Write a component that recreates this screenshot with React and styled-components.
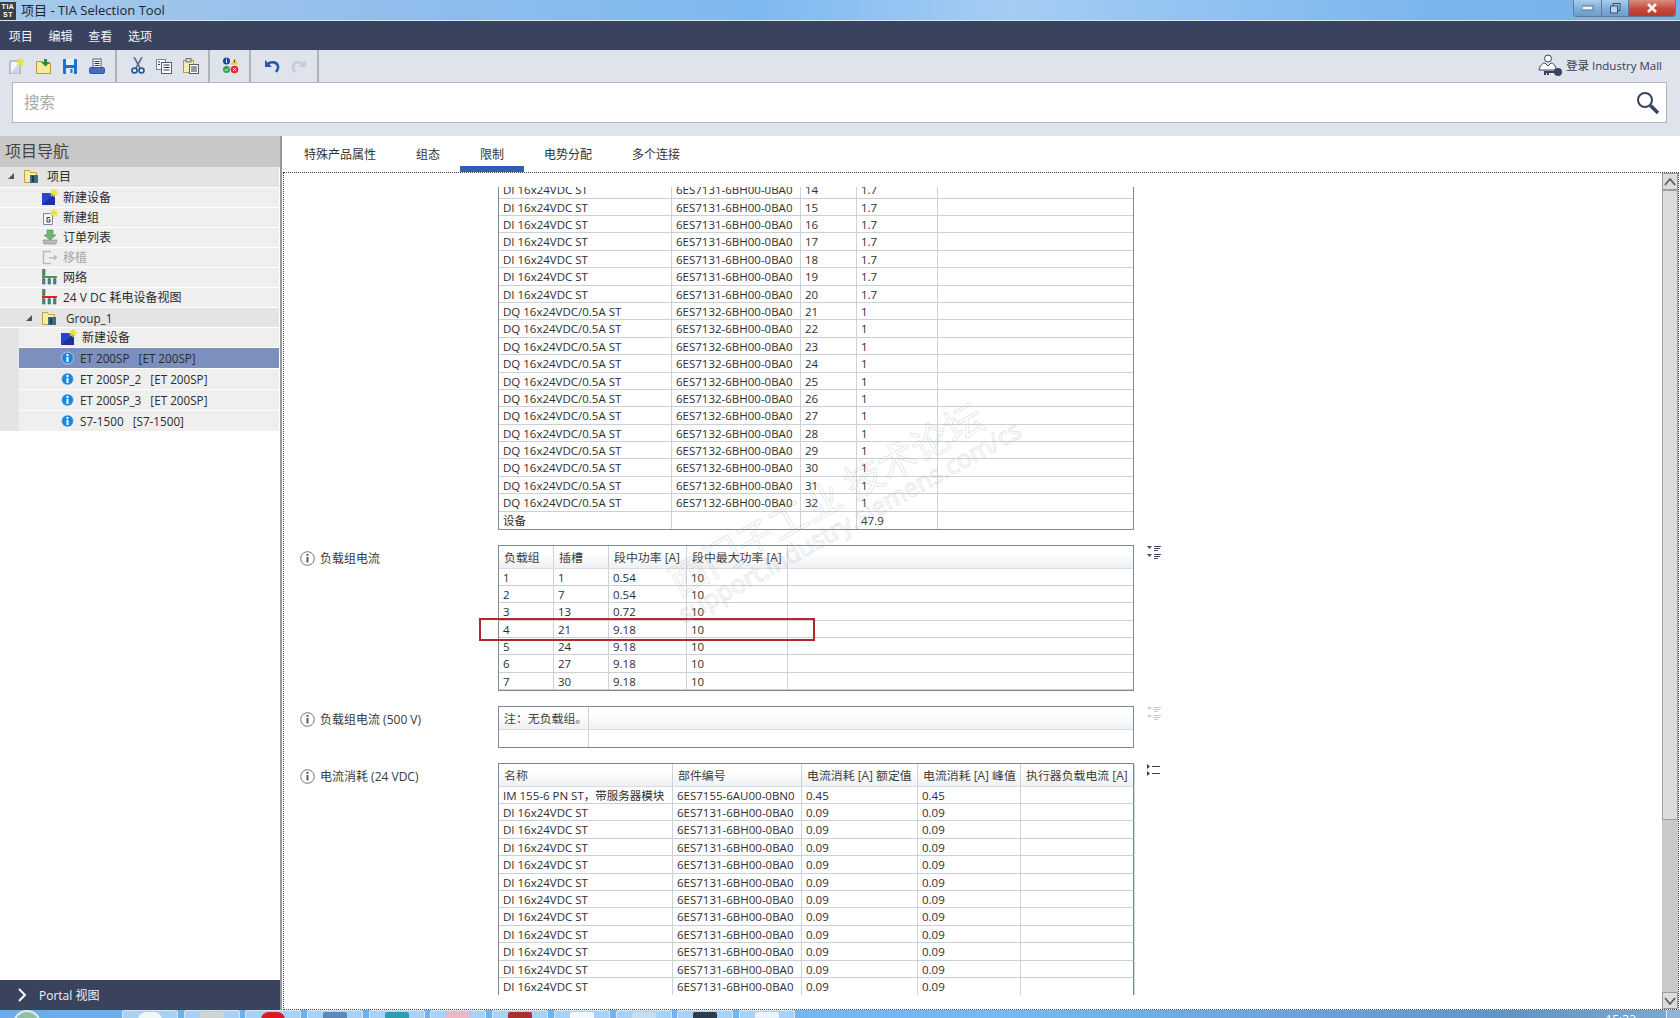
import React from "react";
import styled, { createGlobalStyle } from "styled-components";

const Global = createGlobalStyle`
  html, body { margin: 0; padding: 0; background: #fff; }
  * { box-sizing: border-box; }
  body { font-family: "Open Sans", "Noto Sans CJK SC", "Noto Sans", sans-serif; font-size: 12px; color: #2b2b2b; }
`;

const Page = styled.div`
  width: 1680px; height: 1018px; display: flex; flex-direction: column; overflow: hidden; position: relative;
`;

/* ---------- title bar ---------- */
const TitleBar = styled.div`
  height: 21px; flex: none; display: flex; align-items: flex-start; justify-content: space-between;
  background: linear-gradient(90deg, #a6c9ea 0%, #8fbdec 25%, #7fb8f0 45%, #a4cdf3 60%, #7cb5ee 85%, #79b2e8 100%);
  border-bottom: 1px solid #d8e6f4;
`;
const TitleLeft = styled.div`display: flex; align-items: center; height: 20px;`;
const AppLogo = styled.div`
  width: 16px; height: 18px; background: #3c3f45; color: #fff; font: 700 7px/8px "Liberation Sans", sans-serif;
  text-align: center; margin-top: 2px; padding-top: 1px; letter-spacing: .5px;
`;
const TitleText = styled.span`margin-left: 5px; font-size: 13px; color: #1d2530; line-height: 22px;`;
const WinControls = styled.div`
  display: flex; height: 17px; margin-right: 4px; border: 1px solid #5c7a99; border-top: none; border-radius: 0 0 4px 4px; overflow: hidden;
`;
const WinBtn = styled.div`
  width: ${p => p.$w}px; display: flex; align-items: center; justify-content: center;
  background: ${p => p.$close ? "linear-gradient(#d98d80, #c5493a 55%, #b83a2c)" : "linear-gradient(#a9cdec, #82b0dc 50%, #6c9ccc)"};
  border-right: ${p => p.$close ? "none" : "1px solid #5c7a99"};
`;

/* ---------- menu ---------- */
const MenuBar = styled.div`
  height: 29px; flex: none; background: #3a435e; display: flex; align-items: center; padding-left: 1px;
`;
const MenuItem = styled.div`width: 39.7px; text-align: center; color: #f2f4f8; font-size: 12px;`;

/* ---------- toolbar + search ---------- */
const TopArea = styled.div`height: 86px; flex: none; background: #dfe3ec; display: flex; flex-direction: column;`;
const ToolRow = styled.div`height: 32px; flex: none; display: flex; justify-content: space-between; align-items: stretch;`;
const ToolGroups = styled.div`display: flex;`;
const ToolGroup = styled.div`
  display: flex; align-items: center; gap: ${p => p.$gap ?? 11}px; padding: 0 ${p => p.$pr ?? 10}px 1px ${p => p.$pl}px; border-right: 2px solid #aeb2bb; height: 32px;
`;
const Login = styled.div`display: flex; align-items: center; gap: 3px; padding-right: 18px; padding-bottom: 2px; color: #333c50; font-size: 11.5px;`;
const SearchBox = styled.div`
  height: 41px; margin: 0 13px 0 12px; background: #fff; border: 1px solid #b2b5ba; display: flex; align-items: center; justify-content: space-between;
  padding: 0 6px 0 11px;
`;
const Placeholder = styled.span`font-size: 15.5px; color: #a9a9a9; padding-bottom: 2px;`;

/* ---------- body ---------- */
const Body = styled.div`flex: 1; display: flex; min-height: 0;`;
const Nav = styled.div`width: 280px; flex: none; display: flex; flex-direction: column; background: #fff;`;
const NavHeader = styled.div`height: 31px; flex: none; background: #c8c8c8; color: #444; font-size: 16px; line-height: 31px; padding-left: 5px;`;
const Tree = styled.div`flex: 1; display: flex; flex-direction: column; gap: 1px;`;
const TreeRow = styled.div`
  height: ${p => p.$h || 19}px; flex: none; display: flex; align-items: center; padding-left: ${p => p.$pad}px;
  padding-bottom: ${p => p.$latin ? 0 : 2}px; margin-right: 1px;
  background: ${p => p.$selected ? "#7d8fbd" : p.$folder ? "#e4e4e4" : "#efefef"};
  color: ${p => p.$muted ? "#a5a5a5" : "#2b2b2b"}; font-size: ${p => p.$latin ? 11.7 : 12}px; white-space: pre;
`;
const Arrow = styled.span`
  width: 0; height: 0; border-left: 6px solid transparent; border-bottom: 6px solid #555; margin-right: 10px; flex: none;
`;
const TreeIcon = styled.span`display: flex; align-items: center; width: ${p => p.$w || 16}px; height: 16px; flex: none; margin-right: ${p => p.$gap ?? 5}px;`;
const GroupBody = styled.div`background: linear-gradient(90deg, #e4e4e4 19px, #fff 19px); padding-left: 19px; display: flex; flex-direction: column; gap: 1px;`;
const PortalBar = styled.div`
  height: 30px; flex: none; background: #3a435e; color: #f0f2f6; display: flex; align-items: center; gap: 12px; padding-left: 17px; font-size: 12px;
`;

const Main = styled.div`flex: 1; display: flex; flex-direction: column; border-left: 2px solid #9a9a9a; min-width: 0; position: relative;`;
const Tabs = styled.div`height: 36px; flex: none; display: flex; padding-left: 2px; background: #fff;`;
const Tab = styled.div`
  padding: 0 20px; font-size: 12px; color: #333; height: 36px; line-height: 38px;
  border-bottom: 6px solid ${p => p.$active ? "#2f5fae" : "transparent"};
`;
const ContentFrame = styled.div`flex: 1; min-height: 0; display: flex; border: 1px dotted #444; margin-left: 1px; margin-right: 1px;`;
const Viewport = styled.div`flex: 1; margin: 14px 0 14px; overflow: hidden; min-width: 0;`;
const Sections = styled.div`display: flex; flex-direction: column; gap: 15px; margin-top: -5.8px;`;
const Section = styled.div`display: flex; align-items: flex-start;`;
const Label = styled.div`
  width: 214px; flex: none; display: flex; align-items: center; gap: 5px; padding-left: 16px; margin-top: 4px; height: 18px; color: #3a3a3a; font-size: 12px;
`;
const DataTable = styled.div`
  width: 636px; flex: none; position: relative;
  border-left: 1px solid #7b8a99; border-right: 1px solid #7b8a99;
  border-bottom: ${p => p.$open ? "none" : "1px solid #7b8a99"};
  border-top: ${p => p.$noTop ? "none" : "1px solid #7b8a99"};
`;
const Row = styled.div`
  display: grid; grid-template-columns: ${p => p.$cols}; height: 17.4px; border-bottom: 1px solid #cbd0d6;
  &:last-child { border-bottom: none; }
`;
const HeadRow = styled(Row)`
  height: 22.5px; background: linear-gradient(#fff 0%, #fff 30%, #eef0f3 100%); border-bottom: 1px solid #d9dce0;
`;
const Cell = styled.div`
  padding-left: 4px; line-height: 17px; white-space: nowrap; overflow: hidden; border-right: 1px solid #cfd3d8; font-size: 11.5px; color: #2e2e2e;
  &:last-child { border-right: none; }
`;
const HeadCell = styled(Cell)`line-height: 23px; color: #3e3e3e; padding-left: 5px; font-size: 11.9px;`;
const ActionIcon = styled.span`display: flex; margin-left: 12px; width: 16px; height: 16px;`;
const RedBox = styled.div`
  position: absolute; left: -20px; top: 71.5px; width: 336px; height: 23px; border: 2.5px solid #b3262c; pointer-events: none;
`;

const ScrollBar = styled.div`width: 16px; flex: none; background: #c9c9c9; display: flex; flex-direction: column; justify-content: space-between;`;
const ScrollBtn = styled.div`height: 17px; background: #dcdcdc; border: 1px solid #9a9a9a; display: flex; align-items: center; justify-content: center; flex: none;`;
const ScrollThumb = styled.div`height: 630px; flex: none; background: #dcdcdc; border: 1px solid #a0a0a0;`;
const ScrollTop = styled.div`display: flex; flex-direction: column;`;

const WatermarkBig = styled.div`
  position: absolute; left: 543px; top: 361px; transform: translate(-50%, -50%) rotate(-29deg); white-space: nowrap;
  font-size: 38px; color: rgba(255,255,255,0); -webkit-text-stroke: 1px rgba(170,175,180,.3); pointer-events: none;
`;
const WatermarkSmall = styled.div`
  position: absolute; left: 567px; top: 385px; transform: translate(-50%, -50%) rotate(-29deg); white-space: nowrap;
  font-size: 25px; color: rgba(255,255,255,0); -webkit-text-stroke: 1px rgba(170,175,180,.3); pointer-events: none;
`;

/* ---------- taskbar ---------- */
const Taskbar = styled.div`
  height: 8px; flex: none; position: relative; display: flex; align-items: flex-start; padding-left: 13px; overflow: hidden;
  background: linear-gradient(90deg, #6aaee8, #76b8f0 60%, #5f96c8 90%, #7fa8cc);
`;
const Orb = styled.div`width: 28px; height: 28px; border-radius: 50%; border: 2px solid #dfe9f2; background: #8fc2a0; margin-right: 81px; flex: none;`;
const TaskBtn = styled.div`
  width: 56px; height: 12px; margin-right: 5.7px; flex: none; border: 1px solid #d5e6f6; border-radius: 2px 2px 0 0; background: #a9d1f3;
  display: flex; justify-content: center; padding-top: 1px;
`;
const TaskGlyph = styled.span`width: 24px; height: 14px; background: ${p => p.$c}; border-radius: ${p => p.$round ? "8px" : "2px"} ${p => p.$round ? "8px" : "2px"} 0 0; display: block;`;
const Clock = styled.span`
  position: absolute; right: 44px; top: 4px; color: #fff; font-size: 12px; line-height: 12px;
`;
const ShowDesktop = styled.span`position: absolute; right: 0; top: 0; width: 14px; height: 8px; background: #8fb4d6; border-left: 1px solid #dbe8f3;`;

/* ---------- icons ---------- */
const S = ({ w = 16, h = 16, children }) => <svg width={w} height={h} viewBox={`0 0 ${w} ${h}`}>{children}</svg>;
const Star = ({ x = 11, y = 4, c = "#e8e23a" }) => (
  <g stroke={c} strokeWidth="1.4" strokeLinecap="round">
    <path d={`M${x} ${y - 3.5}V${y + 3.5}M${x - 3.5} ${y}H${x + 3.5}M${x - 2.5} ${y - 2.5}L${x + 2.5} ${y + 2.5}M${x + 2.5} ${y - 2.5}L${x - 2.5} ${y + 2.5}`} />
  </g>
);
const NewDoc = () => <S><path d="M1 3h10v13H1z" fill="#f4f6fb" stroke="#8b93a8" /><path d="M2 15L10 5v10z" fill="#cfd6ea" /><Star x={11} y={4} /></S>;
const OpenFolder = () => <S><path d="M.5 3.5h6l1 2h7v10H.5z" fill="#fbe99a" stroke="#b59a3c" /><path d="M8 1h3v3h3l-4.500 4.500L5 4h3z" fill="#2e8b3a" /></S>;
const Save = () => <S><rect x="1" y="1" width="14" height="15" rx="1" fill="#1e72c8" /><rect x="4" y="1" width="8" height="6" fill="#e8f0fa" /><rect x="4" y="10" width="8" height="6" fill="#dfe7f2" /><rect x="8.500" y="11" width="2" height="4" fill="#1e72c8" /></S>;
const PrintIcon = () => <S><rect x="4" y="1" width="8" height="9" fill="#fff" stroke="#545c72" /><path d="M5.500 3.500h5M5.500 5.500h5M5.500 7.500h5" stroke="#333" /><rect x="0.500" y="9.500" width="15" height="6" rx="1.500" fill="#4a6bc4" stroke="#3a55a8" /></S>;
const Cut = () => <S w={14} h={17}><path d="M3 0l6 11M11 0L5 11" stroke="#5d6d8a" strokeWidth="1.600" /><circle cx="3.500" cy="13.500" r="2.500" fill="none" stroke="#1f4f98" strokeWidth="1.600" /><circle cx="10.500" cy="13.500" r="2.500" fill="none" stroke="#1f4f98" strokeWidth="1.600" /></S>;
const CopyIcon = () => <S><rect x=".5" y="1.500" width="9" height="10" fill="#fff" stroke="#7a8398" /><rect x="5.500" y="4.500" width="10" height="11" fill="#fff" stroke="#545c72" /><path d="M7.500 7h6M7.500 9.500h6M7.500 12h6M2 4h2M2 6.500h2" stroke="#2d3548" /></S>;
const PasteIcon = () => <S><rect x=".5" y="2.500" width="10" height="12" fill="#f6eeb5" stroke="#a89a50" /><rect x="3" y="0.500" width="5" height="3.500" fill="#cfd3dc" stroke="#777" /><rect x="6.500" y="6.500" width="9" height="9" fill="#fff" stroke="#545c72" /><path d="M8 9h6M8 11h6M8 13h6" stroke="#2d3548" /></S>;
const StatusIcon = () => (
  <S w={17} h={17}>
    <circle cx="4.500" cy="4" r="3.500" fill="#1e3fae" /><rect x="4" y="3" width="1" height="3" fill="#fff" /><rect x="4" y="1.500" width="1" height="1" fill="#fff" />
    <path d="M12.500 0.500l3.800 7h-7.600z" fill="#f1d32c" /><rect x="12" y="3" width="1" height="2.500" fill="#333" />
    <circle cx="4.500" cy="12.500" r="3.500" fill="#2ea44a" /><path d="M2.800 12.500l1.300 1.300 2-2.300" stroke="#fff" fill="none" />
    <circle cx="12.500" cy="12.500" r="3.800" fill="#d92e36" /><path d="M11 11l3 3M14 11l-3 3" stroke="#fff" />
  </S>
);
const Undo = ({ c = "#2a55a8" }) => <S><path d="M1 2v7h7z" fill={c} /><path d="M4 6c3-3 9-2 10 2 .5 2-.5 4-2 6" fill="none" stroke={c} strokeWidth="2.600" /></S>;
const Redo = () => <svg width="16" height="16" viewBox="0 0 16 16"><g transform="translate(16 0) scale(-1 1)"><path d="M1 2v7h7z" fill="#c3cbdc" /><path d="M4 6c3-3 9-2 10 2 .5 2-.5 4-2 6" fill="none" stroke="#c3cbdc" strokeWidth="2.600" /></g></svg>;

const UserKey = () => (
  <svg width="25" height="25" viewBox="0 0 25 25">
    <circle cx="10" cy="5.500" r="3.500" fill="#fff" stroke="#3a435e" />
    <path d="M1 17c1-5 4-7 6-7l3 3 3-3c2 0 4 2 5 5l-1 2z" fill="#fff" stroke="#3a435e" />
    <circle cx="20" cy="19" r="4" fill="#3a435e" />
    <path d="M6 19h12M7 19v3M10 19v3" stroke="#3a435e" strokeWidth="2" />
  </svg>
);
const Magnifier = () => (
  <svg width="24" height="24" viewBox="0 0 24 24">
    <circle cx="9" cy="9" r="7" fill="none" stroke="#3a435e" strokeWidth="2" />
    <path d="M14.500 14.500L22 22" stroke="#3a435e" strokeWidth="3.500" />
  </svg>
);
const FolderIcon = () => (
  <svg width="16" height="16" viewBox="0 0 16 16">
    <path d="M.5 2.500h5l1 2h6v10H.5z" fill="#fbeaa6" stroke="#c4a24a" />
    <rect x="6" y="7" width="8" height="8" fill="#3e6b7e" /><rect x="8" y="8" width="2" height="6" fill="#1c3d50" />
  </svg>
);
const NewDevice = () => <svg width="16" height="16" viewBox="0 0 16 16"><path d="M0 4h13v12H0z" fill="#2c44c8" /><path d="M0 16L13 4v12z" fill="#1f2f9c" /><Star x={12} y={4} /></svg>;
const NewGroup = () => <svg width="16" height="16" viewBox="0 0 16 16"><path d="M1.500 4.500h9v11h-9z" fill="#f4f6fa" stroke="#7f8798" /><path d="M8 8.500H5v4.500h3v-2.200H6.500" fill="none" stroke="#3a3a3a" /><Star x={12} y={4} /></svg>;
const OrderIcon = () => <svg width="16" height="16" viewBox="0 0 16 16"><path d="M5 1h6v5h3l-6 5-6-5h3z" fill="#6fb56f" stroke="#4b8c4b" strokeWidth=".6" /><path d="M1 11h14l-1 4H2z" fill="#b9bdb2" stroke="#85897e" strokeWidth=".6" /></svg>;
const Migrate = () => <svg width="16" height="16" viewBox="0 0 16 16"><path d="M9 2.500H1.500v12H9" fill="none" stroke="#bbb" strokeWidth="1.400" /><path d="M7 8h5V5.500l3.500 3-3.500 3V9.500H7z" fill="#bbb" /></svg>;
const NetIcon = ({ c }) => (
  <svg width="16" height="16" viewBox="0 0 16 16">
    <rect x="0.500" y="0.500" width="2.500" height="6" fill="#4f8a5c" stroke="#2f6040" strokeWidth=".5" />
    <rect x="0" y="7" width="15" height="2" fill={c} />
    {[0.5, 6, 11.5].map(x => <rect key={x} x={x} y="10" width="2.500" height="5" fill="#4f8a8c" stroke="#2f5060" strokeWidth=".5" />)}
    <path d="M1.700 9v1M7.200 9v1M12.700 9v1" stroke="#333" />
  </svg>
);
const InfoDot = () => (
  <svg width="14" height="14" viewBox="0 0 14 14">
    <circle cx="6.500" cy="7" r="6" fill="#1a86e0" stroke="#e6f2fc" strokeWidth=".6" />
    <rect x="5.500" y="6" width="2" height="5" fill="#fff" /><circle cx="6.500" cy="4" r="1.200" fill="#fff" />
  </svg>
);
const InfoRing = () => (
  <svg width="15" height="15" viewBox="0 0 15 15" style={{ flex: "none" }}>
    <circle cx="7.500" cy="7.500" r="6.800" fill="#fff" stroke="#70757c" />
    <rect x="6.500" y="6" width="2" height="5.500" fill="#555b63" /><circle cx="7.500" cy="3.900" r="1.100" fill="#555b63" />
  </svg>
);
const SortIcon = ({ c = "#4a5064" }) => (
  <svg width="16" height="16" viewBox="0 0 16 16">
    <path d="M1 1h5L3.500 4zM1 9h5l-2.500 3z" fill={c} />
    <path d="M8 1.500h7M8 3.500h6M8 5.500h4M8 9.500h7M8 11.500h6M8 13.500h4" stroke={c} />
  </svg>
);
const ListIcon = () => (
  <svg width="16" height="16" viewBox="0 0 16 16">
    <path d="M1 1l3 2.500L1 6zM1 8l3 2.500L1 13z" fill="#3a4058" />
    <path d="M6 3.500h8M6 10.500h8" stroke="#3a4058" strokeWidth="1.200" />
  </svg>
);
const Chevron = ({ down }) => (
  <svg width="12" height="8" viewBox="0 0 12 8">
    <path d={down ? "M1 1l5 6 5-6" : "M1 7l5-6 5 6"} fill="none" stroke="#5a6068" strokeWidth="1.800" />
  </svg>
);

/* ---------- data ---------- */
const cols1 = "173px 129px 56px 81px 1fr";
const cols2 = "55px 55px 78px 101px 1fr";
const cols3 = "90px 1fr";
const cols4 = "174px 129px 116px 103px 114px 1fr";

const powerRows = [];
for (let i = 14; i <= 20; i++) powerRows.push(["DI 16x24VDC ST", "6ES7131-6BH00-0BA0", i, "1.7", ""]);
for (let i = 21; i <= 32; i++) powerRows.push(["DQ 16x24VDC/0.5A ST", "6ES7132-6BH00-0BA0", i, "1", ""]);
powerRows.push(["设备", "", "", "47.9", ""]);

const groupRows = [[1, 1, "0.54"], [2, 7, "0.54"], [3, 13, "0.72"], [4, 21, "9.18"], [5, 24, "9.18"], [6, 27, "9.18"], [7, 30, "9.18"]]
  .map(r => [...r, "10", ""]);

const currentRows = [["IM 155-6 PN ST，带服务器模块", "6ES7155-6AU00-0BN0", "0.45", "0.45", "", ""]];
for (let i = 0; i < 11; i++) currentRows.push(["DI 16x24VDC ST", "6ES7131-6BH00-0BA0", "0.09", "0.09", "", ""]);

const TableRows = ({ rows, cols }) => rows.map((r, i) => (
  <Row key={i} $cols={cols}>{r.map((c, j) => <Cell key={j}>{c}</Cell>)}</Row>
));
const Head = ({ labels, cols }) => (
  <HeadRow $cols={cols}>{labels.map((l, i) => <HeadCell key={i}>{l}</HeadCell>)}</HeadRow>
);

const taskColors = [["#f2f6f4", true], ["#cfd3d6"], ["#e01822", true], ["#5f86b8"], ["#2f9fb0"], ["#eeb7c6"], ["#a83030"], ["#f4f8fc"], ["#c8ddf0"], ["#2f3a4c"], ["#eef2f6"]];

export default function App() {
  return (
    <Page>
      <Global />
      <TitleBar>
        <TitleLeft>
          <AppLogo>TIA<br />ST</AppLogo>
          <TitleText>项目 - TIA Selection Tool</TitleText>
        </TitleLeft>
        <WinControls>
          <WinBtn $w={28}><svg width="12" height="6"><rect width="11" height="4" y="1" fill="#f0f4f8" stroke="#55708c" /></svg></WinBtn>
          <WinBtn $w={27}><svg width="11" height="11"><rect x="3" y=".5" width="7" height="7" fill="none" stroke="#3c5068" /><rect x=".5" y="3" width="7" height="7" fill="#b9d4ec" stroke="#3c5068" /></svg></WinBtn>
          <WinBtn $w={46} $close><svg width="12" height="10"><path d="M2 1l8 8M10 1l-8 8" stroke="#f6f2ee" strokeWidth="2.600" /></svg></WinBtn>
        </WinControls>
      </TitleBar>

      <MenuBar>
        {["项目", "编辑", "查看", "选项"].map(m => <MenuItem key={m}>{m}</MenuItem>)}
      </MenuBar>

      <TopArea>
        <ToolRow>
          <ToolGroups>
            <ToolGroup $pl={9} $gap={10.6}><NewDoc /><OpenFolder /><Save /><PrintIcon /></ToolGroup>
            <ToolGroup $pl={14} $pr={9}><Cut /><CopyIcon /><PasteIcon /></ToolGroup>
            <ToolGroup $pl={12}><StatusIcon /></ToolGroup>
            <ToolGroup $pl={13}><Undo /><Redo /></ToolGroup>
          </ToolGroups>
          <Login><UserKey /><span>登录 Industry Mall</span></Login>
        </ToolRow>
        <SearchBox>
          <Placeholder>搜索</Placeholder>
          <Magnifier />
        </SearchBox>
      </TopArea>

      <Body>
        <Nav>
          <NavHeader>项目导航</NavHeader>
          <Tree>
            <TreeRow $h={20} $folder $pad={8}><Arrow /><TreeIcon $gap={7}><FolderIcon /></TreeIcon>项目</TreeRow>
            <TreeRow $pad={42}><TreeIcon><NewDevice /></TreeIcon>新建设备</TreeRow>
            <TreeRow $pad={42}><TreeIcon><NewGroup /></TreeIcon>新建组</TreeRow>
            <TreeRow $pad={42}><TreeIcon><OrderIcon /></TreeIcon>订单列表</TreeRow>
            <TreeRow $pad={42} $muted><TreeIcon><Migrate /></TreeIcon>移植</TreeRow>
            <TreeRow $pad={42}><TreeIcon><NetIcon c="#3aa04a" /></TreeIcon>网络</TreeRow>
            <TreeRow $pad={42}><TreeIcon><NetIcon c="#d8232a" /></TreeIcon>24 V DC 耗电设备视图</TreeRow>
            <TreeRow $folder $latin $pad={26}><Arrow /><TreeIcon $gap={8}><FolderIcon /></TreeIcon>Group_1</TreeRow>
            <GroupBody>
              <TreeRow $pad={42}><TreeIcon><NewDevice /></TreeIcon>新建设备</TreeRow>
              <TreeRow $h={20} $latin $pad={42} $selected><TreeIcon $gap={5} $w={14}><InfoDot /></TreeIcon>{"ET 200SP   [ET 200SP]"}</TreeRow>
              <TreeRow $h={20} $latin $pad={42}><TreeIcon $gap={5} $w={14}><InfoDot /></TreeIcon>{"ET 200SP_2   [ET 200SP]"}</TreeRow>
              <TreeRow $h={20} $latin $pad={42}><TreeIcon $gap={5} $w={14}><InfoDot /></TreeIcon>{"ET 200SP_3   [ET 200SP]"}</TreeRow>
              <TreeRow $h={20} $latin $pad={42}><TreeIcon $gap={5} $w={14}><InfoDot /></TreeIcon>{"S7-1500   [S7-1500]"}</TreeRow>
            </GroupBody>
          </Tree>
          <PortalBar>
            <svg width="10" height="14" viewBox="0 0 10 14"><path d="M2 1l6 6-6 6" fill="none" stroke="#fff" strokeWidth="2" /></svg>
            <span>Portal 视图</span>
          </PortalBar>
        </Nav>

        <Main>
          <Tabs>
            <Tab>特殊产品属性</Tab>
            <Tab>组态</Tab>
            <Tab $active>限制</Tab>
            <Tab>电势分配</Tab>
            <Tab>多个连接</Tab>
          </Tabs>
          <ContentFrame>
            <Viewport>
              <Sections>
                <Section>
                  <Label />
                  <DataTable $noTop><TableRows rows={powerRows} cols={cols1} /></DataTable>
                </Section>
                <Section>
                  <Label><InfoRing />负载组电流</Label>
                  <DataTable>
                    <Head labels={["负载组", "插槽", "段中功率 [A]", "段中最大功率 [A]", ""]} cols={cols2} />
                    <TableRows rows={groupRows} cols={cols2} />
                    <RedBox />
                  </DataTable>
                  <ActionIcon><SortIcon /></ActionIcon>
                </Section>
                <Section>
                  <Label><InfoRing />负载组电流 (500 V)</Label>
                  <DataTable>
                    <Head labels={["注：无负载组。", ""]} cols={cols3} />
                    <Row $cols={cols3}><Cell /><Cell /></Row>
                  </DataTable>
                  <ActionIcon><SortIcon c="#c6c9d0" /></ActionIcon>
                </Section>
                <Section>
                  <Label><InfoRing />电流消耗 (24 VDC)</Label>
                  <DataTable $open>
                    <Head labels={["名称", "部件编号", "电流消耗 [A] 额定值", "电流消耗 [A] 峰值", "执行器负载电流 [A]", ""]} cols={cols4} />
                    <TableRows rows={currentRows} cols={cols4} />
                  </DataTable>
                  <ActionIcon><ListIcon /></ActionIcon>
                </Section>
              </Sections>
            </Viewport>
            <ScrollBar>
              <ScrollTop>
                <ScrollBtn><Chevron /></ScrollBtn>
                <ScrollThumb />
              </ScrollTop>
              <ScrollBtn><Chevron down /></ScrollBtn>
            </ScrollBar>
          </ContentFrame>
          <WatermarkBig>西门子工业 技术论坛</WatermarkBig>
          <WatermarkSmall>support.industry.siemens.com/cs</WatermarkSmall>
        </Main>
      </Body>

      <Taskbar>
        <Orb />
        {taskColors.map(([c, round], i) => <TaskBtn key={i}><TaskGlyph $c={c} $round={round} /></TaskBtn>)}
        <Clock>15:33</Clock>
        <ShowDesktop />
      </Taskbar>
    </Page>
  );
}
